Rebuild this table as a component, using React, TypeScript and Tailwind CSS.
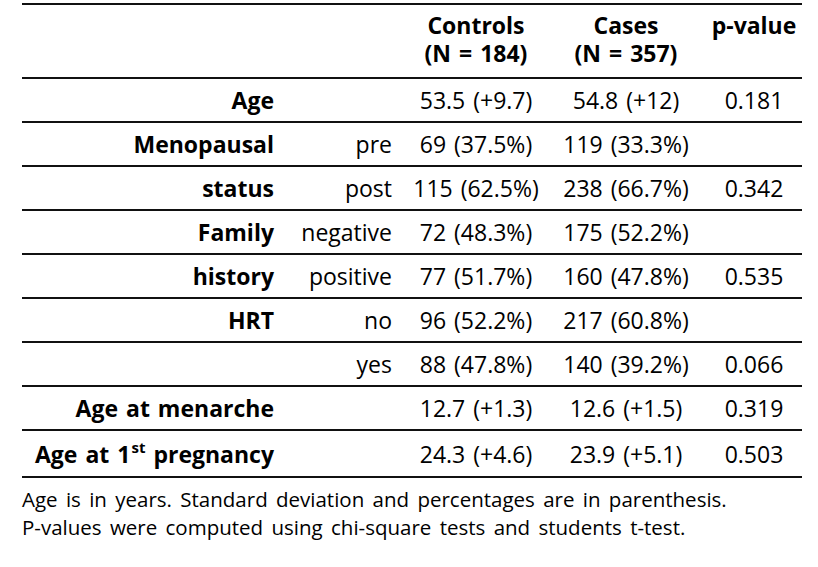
import React from "react";

type Row = {
  label?: React.ReactNode;
  sub?: string;
  controls: string;
  cases: string;
  p?: string;
  tall?: boolean;
};

const rows: Row[] = [
  { label: "Age", controls: "53.5 (+9.7)", cases: "54.8 (+12)", p: "0.181" },
  { label: "Menopausal", sub: "pre", controls: "69 (37.5%)", cases: "119 (33.3%)" },
  { label: "status", sub: "post", controls: "115 (62.5%)", cases: "238 (66.7%)", p: "0.342" },
  { label: "Family", sub: "negative", controls: "72 (48.3%)", cases: "175 (52.2%)" },
  { label: "history", sub: "positive", controls: "77 (51.7%)", cases: "160 (47.8%)", p: "0.535" },
  { label: "HRT", sub: "no", controls: "96 (52.2%)", cases: "217 (60.8%)" },
  { sub: "yes", controls: "88 (47.8%)", cases: "140 (39.2%)", p: "0.066" },
  { label: "Age at menarche", controls: "12.7 (+1.3)", cases: "12.6 (+1.5)", p: "0.319" },
  {
    label: (
      <>
        Age at 1<sup className="text-[15px] -top-[10px] ml-[1px]">st</sup> pregnancy
      </>
    ),
    controls: "24.3 (+4.6)",
    cases: "23.9 (+5.1)",
    p: "0.503",
    tall: true,
  },
];

const cols = "grid grid-cols-[262px_116px_152px_148px_102px]";

export default function App() {
  return (
    <div className="min-h-screen bg-white pl-[22px] pt-[3px] text-black font-['Open_Sans',sans-serif] text-[23px] [word-spacing:2px]">
      <div className="w-[780px] border-t-2 border-[#111]">
        <div className={`${cols} h-[74px] border-b-2 border-[#111] font-bold leading-[28px] pt-[6px]`}>
          <div />
          <div />
          <div className="text-center">
            Controls
            <br />
            (N = 184)
          </div>
          <div className="text-center">
            Cases
            <br />
            (N = 357)
          </div>
          <div className="text-center pl-[6px]">p-value</div>
        </div>
        {rows.map((r, i) => (
          <div
            key={i}
            className={`${cols} items-center border-b-2 border-[#111] ${r.tall ? "h-[47px] pt-[2px]" : "h-[44px]"}`}
          >
            <div className="text-right font-bold pr-[10px] whitespace-nowrap">{r.label}</div>
            <div className="text-right pr-[8px]">{r.sub}</div>
            <div className="text-center">{r.controls}</div>
            <div className="text-center">{r.cases}</div>
            <div className="text-center pl-[6px]">{r.p}</div>
          </div>
        ))}
      </div>
      <div className="w-[780px] pt-[7px] leading-[28px] text-[20.5px] [word-spacing:3px]">
        <p>Age is in years. Standard deviation and percentages are in parenthesis.</p>
        <p>P-values were computed using chi-square tests and students t-test.</p>
      </div>
    </div>
  );
}
